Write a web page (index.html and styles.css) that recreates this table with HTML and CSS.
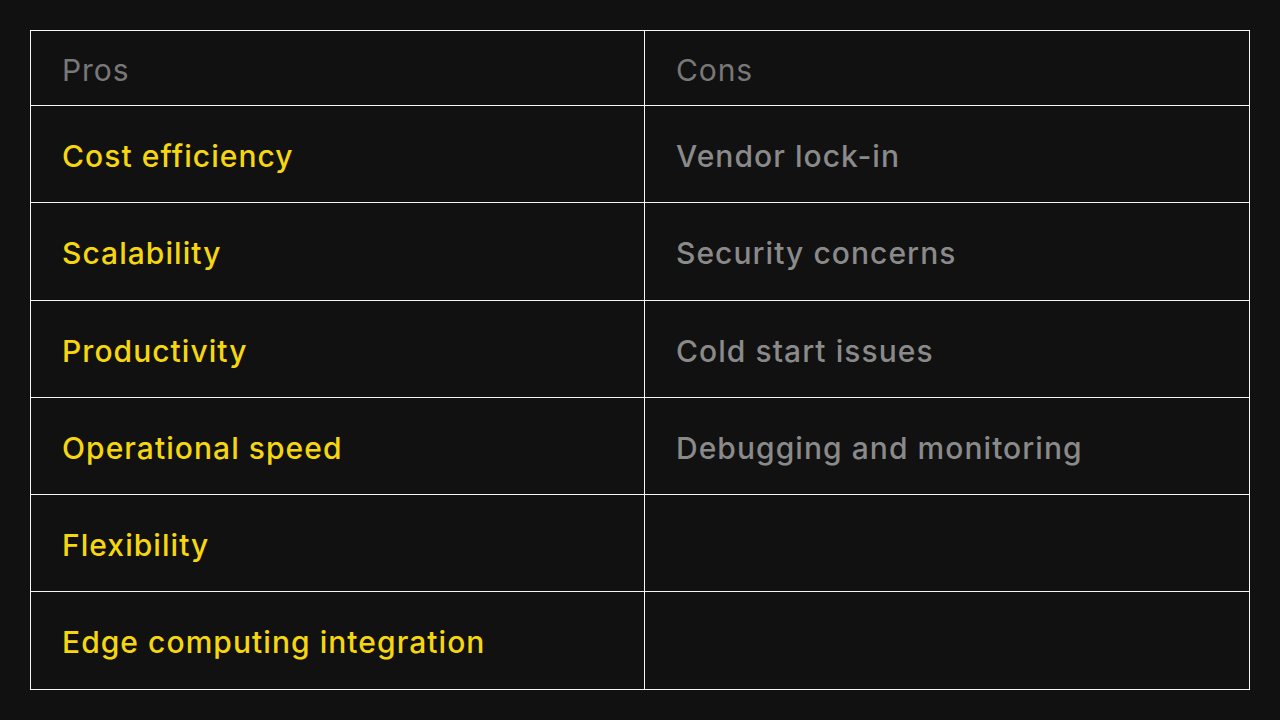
FILE: index.html
```html
<!DOCTYPE html>
<html lang="en">
<head>
<meta charset="utf-8">
<title>Pros and Cons</title>
<link rel="stylesheet" href="styles.css">
</head>
<body>
<div class="table">
  <div class="cell head">Pros</div>
  <div class="cell head">Cons</div>
  <div class="cell pro">Cost efficiency</div>
  <div class="cell con">Vendor lock-in</div>
  <div class="cell pro">Scalability</div>
  <div class="cell con">Security concerns</div>
  <div class="cell pro">Productivity</div>
  <div class="cell con">Cold start issues</div>
  <div class="cell pro">Operational speed</div>
  <div class="cell con">Debugging and monitoring</div>
  <div class="cell pro">Flexibility</div>
  <div class="cell con"></div>
  <div class="cell pro">Edge computing integration</div>
  <div class="cell con"></div>
</div>
</body>
</html>
```
FILE: styles.css
```css
html, body {
  margin: 0;
  padding: 0;
  background: #111111;
}
body {
  padding: 30px;
  font-family: Inter, "Noto Sans", sans-serif;
}
.table {
  display: grid;
  grid-template-columns: 614px 605px;
  grid-template-rows: 75px 97px 98px 97px 97px 97px 98px;
  border-left: 1px solid #f5f5f5;
  border-top: 1px solid #f5f5f5;
  width: max-content;
}
.cell {
  box-sizing: border-box;
  border-right: 1px solid #f5f5f5;
  border-bottom: 1px solid #f5f5f5;
  padding-left: 31px;
  padding-top: 3px;
  display: flex;
  align-items: center;
  font-size: 30px;
  letter-spacing: 1.05px;
}
.head {
  color: #787878;
  font-weight: 400;
  letter-spacing: 0.9px;
}
.pro {
  color: #f6d70f;
  font-weight: 500;
}
.con {
  color: #8a8a8a;
  font-weight: 500;
}
```
